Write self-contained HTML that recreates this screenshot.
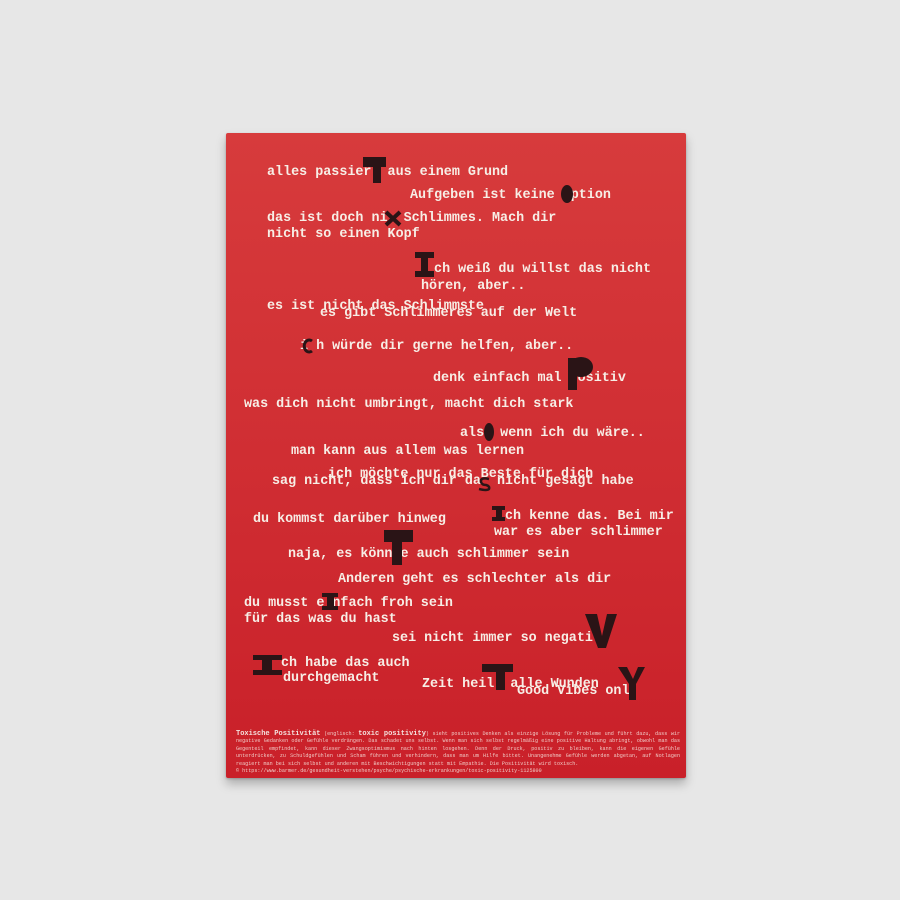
<!DOCTYPE html>
<html><head><meta charset="utf-8"><style>
html,body{margin:0;padding:0}
body{width:900px;height:900px;background:#e7e7e7;position:relative;overflow:hidden;font-family:"Liberation Mono",monospace}
.p{position:absolute;left:226px;top:133px;width:460px;height:645px;background:linear-gradient(180deg,#d73b3c 0%,#d02e33 50%,#c92029 100%);border-radius:2px;box-shadow:0 6px 10px rgba(0,0,0,.25),0 1px 2px rgba(0,0,0,.2)}
.t{position:absolute;font-size:13.4px;line-height:16px;font-weight:bold;color:#f7eee6;white-space:pre;margin-top:3px}
.fn{position:absolute;left:10px;top:598px;width:444px;font-size:5.1px;line-height:7.4px;color:#f0c8c4;font-family:"Liberation Mono",monospace;text-align:justify}
.fn b{font-size:7px;color:#f4e2de}
svg{position:absolute;left:0;top:0}
</style></head><body>
<div class="p">
<div class="t" style="left:41px;top:29px">alles passier  aus einem Grund</div>
<div class="t" style="left:184px;top:52px">Aufgeben ist keine  ption</div>
<div class="t" style="left:41px;top:75px">das ist doch ni  Schlimmes. Mach dir</div>
<div class="t" style="left:41px;top:91px">nicht so einen Kopf</div>
<div class="t" style="left:200px;top:126px"> ch weiß du willst das nicht</div>
<div class="t" style="left:195px;top:143px">hören, aber..</div>
<div class="t" style="left:41px;top:163px">es ist nicht das Schlimmste</div>
<div class="t" style="left:94px;top:170px">es gibt Schlimmeres auf der Welt</div>
<div class="t" style="left:74px;top:203px">i h würde dir gerne helfen, aber..</div>
<div class="t" style="left:207px;top:235px">denk einfach mal  ositiv</div>
<div class="t" style="left:18px;top:261px">was dich nicht umbringt, macht dich stark</div>
<div class="t" style="left:234px;top:290px">als  wenn ich du wäre..</div>
<div class="t" style="left:65px;top:308px">man kann aus allem was lernen</div>
<div class="t" style="left:102px;top:331px">ich möchte nur das Beste für dich</div>
<div class="t" style="left:46px;top:338px">sag nicht, dass ich dir da  nicht gesagt habe</div>
<div class="t" style="left:27px;top:376px">du kommst darüber hinweg</div>
<div class="t" style="left:279px;top:373px">ch kenne das. Bei mir</div>
<div class="t" style="left:268px;top:389px">war es aber schlimmer</div>
<div class="t" style="left:62px;top:411px">naja, es könn e auch schlimmer sein</div>
<div class="t" style="left:112px;top:436px">Anderen geht es schlechter als dir</div>
<div class="t" style="left:18px;top:460px">du musst e nfach froh sein</div>
<div class="t" style="left:18px;top:476px">für das was du hast</div>
<div class="t" style="left:166px;top:495px">sei nicht immer so negati</div>
<div class="t" style="left:55px;top:520px">ch habe das auch</div>
<div class="t" style="left:57px;top:535px">durchgemacht</div>
<div class="t" style="left:196px;top:541px">Zeit heil  alle Wunden</div>
<div class="t" style="left:291px;top:548px">Good Vibes onl</div>
<div class="fn"><b>Toxische Positivität</b> (englisch: <b>toxic positivity</b>) sieht positives Denken als einzige Lösung für Probleme und führt dazu, dass wir negative Gedanken oder Gefühle verdrängen. Das schadet uns selbst. Wenn man sich selbst regelmäßig eine positive Haltung abringt, obwohl man das Gegenteil empfindet, kann dieser Zwangsoptimismus nach hinten losgehen. Denn der Druck, positiv zu bleiben, kann die eigenen Gefühle unterdrücken, zu Schuldgefühlen und Scham führen und verhindern, dass man um Hilfe bittet. Unangenehme Gefühle werden abgetan, auf Notlagen reagiert man bei sich selbst und anderen mit Beschwichtigungen statt mit Empathie. Die Positivität wird toxisch.<br>© https://www.barmer.de/gesundheit-verstehen/psyche/psychische-erkrankungen/toxic-positivity-1125800</div>
</div>
<svg width="900" height="900" viewBox="0 0 900 900" fill="#2a1416">
<rect x="363" y="157" width="23" height="10"/><rect x="373" y="157" width="8" height="26"/>
<ellipse cx="567" cy="194" rx="6" ry="9"/>
<path d="M386 212 L400 225 M400 212 L386 225" stroke="#2a1416" stroke-width="4"/>
<rect x="415" y="252" width="19" height="6"/><rect x="421" y="252" width="7" height="25"/><rect x="415" y="271" width="19" height="6"/>
<path d="M312 341 A5 6 0 1 0 312 351" fill="none" stroke="#2a1416" stroke-width="3"/>
<rect x="568" y="358" width="9" height="32"/><ellipse cx="581" cy="367" rx="12" ry="10"/>
<ellipse cx="489" cy="432" rx="5" ry="9"/>
<path d="M489 479 Q480 477 481 482 Q482 485 486 485 Q490 486 489 489 Q487 491 479 489" fill="none" stroke="#2a1416" stroke-width="2.5"/>
<rect x="492" y="506" width="13" height="4"/><rect x="496" y="506" width="6" height="15"/><rect x="492" y="517" width="13" height="4"/>
<rect x="384" y="530" width="29" height="12"/><rect x="392" y="530" width="10" height="35"/>
<rect x="322" y="593" width="16" height="4"/><rect x="327" y="593" width="7" height="17"/><rect x="322" y="606" width="16" height="4"/>
<polygon points="585,614 597,614 602,636 607,614 617,614 606,648 598,648"/>
<rect x="253" y="655" width="29" height="5"/><rect x="262" y="655" width="10" height="20"/><rect x="253" y="670" width="29" height="5"/>
<rect x="482" y="664" width="31" height="8"/><rect x="496" y="664" width="9" height="26"/>
<polygon points="618,667 627,667 633,679 638,667 645,667 636,684 636,700 629,700 629,684"/>
</svg>
</body></html>
